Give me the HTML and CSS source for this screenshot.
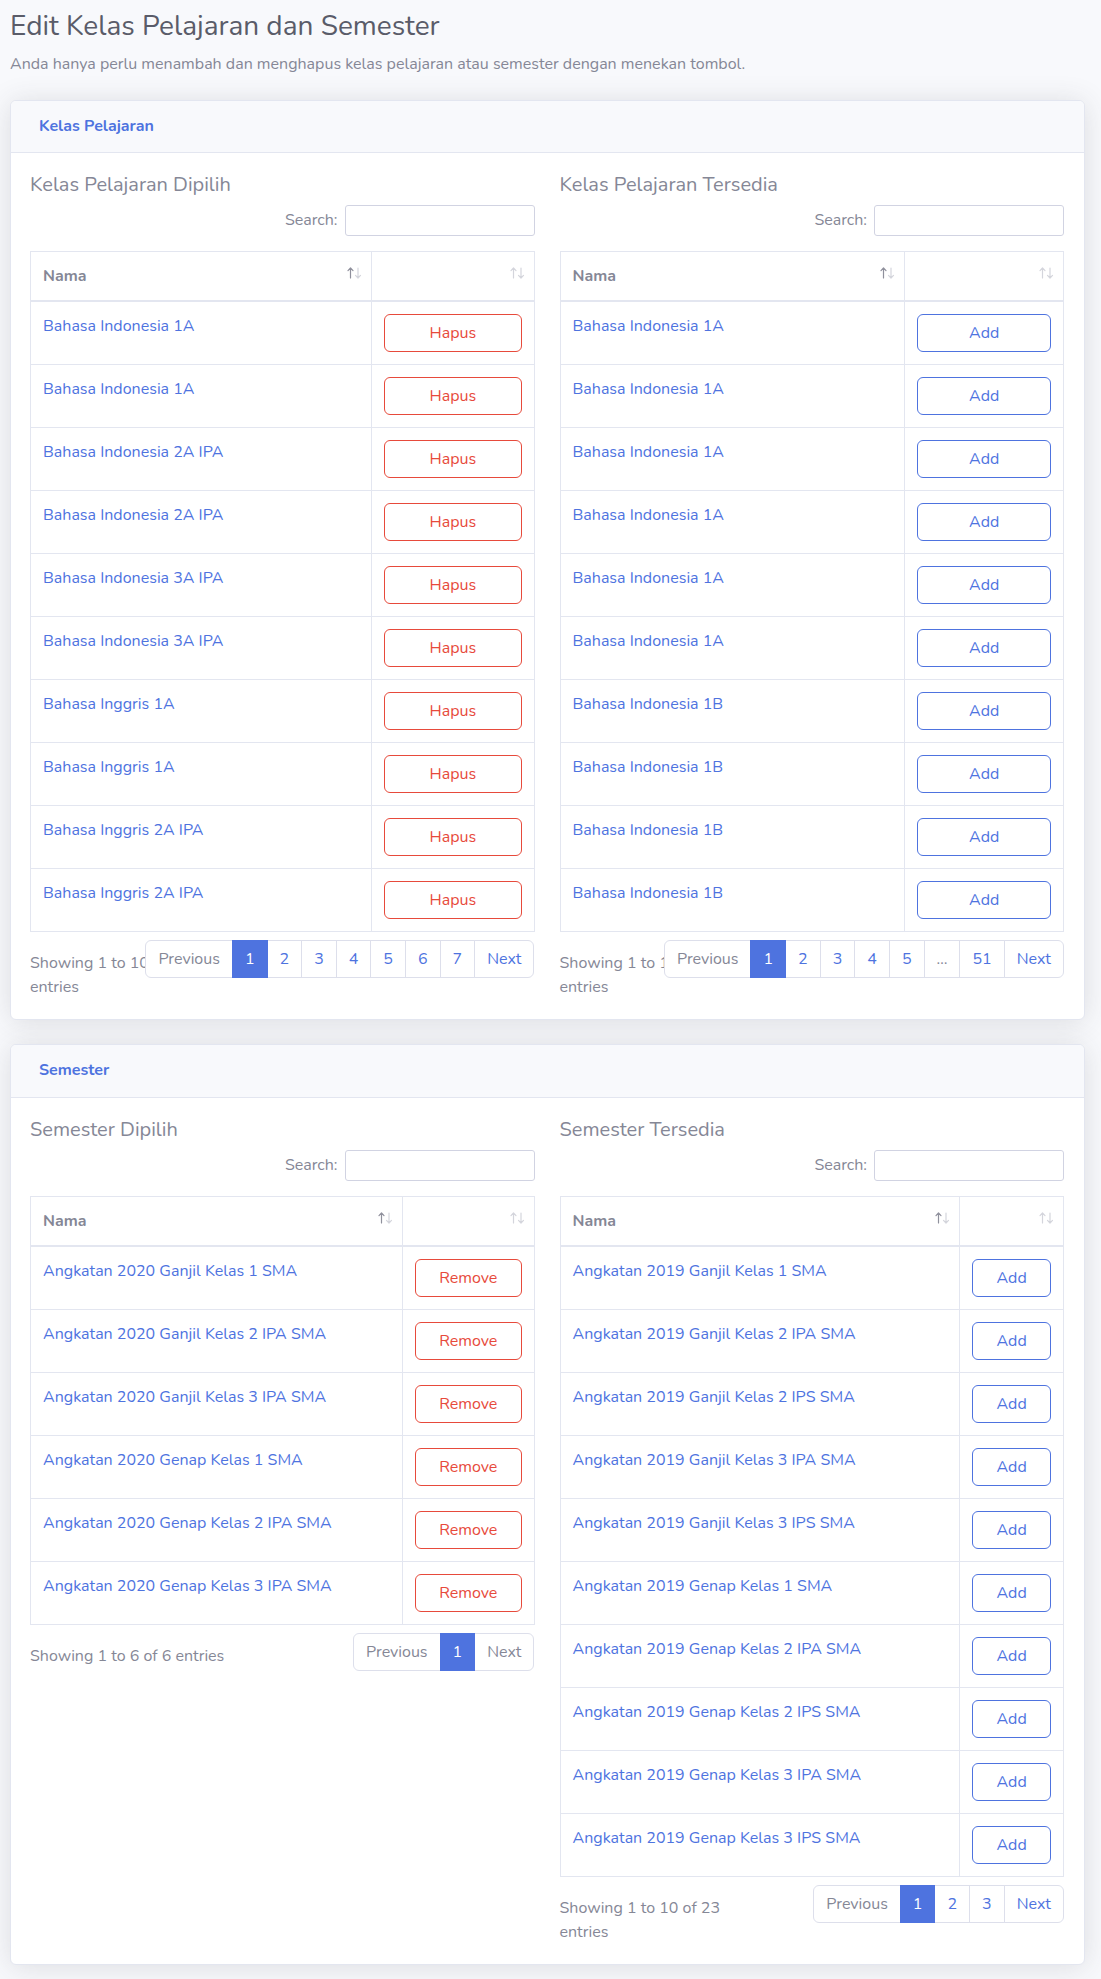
FILE: index.html
```html
<!DOCTYPE html>
<html lang="id">
<head>
<meta charset="utf-8">
<title>Edit Kelas Pelajaran dan Semester</title>
<link rel="stylesheet" href="styles.css">
</head>
<body>
<div class="page">
  <h1 class="title">Edit Kelas Pelajaran dan Semester</h1>
  <p class="subtitle">Anda hanya perlu menambah dan menghapus kelas pelajaran atau semester dengan menekan tombol.</p>

  <div class="card">
    <div class="card-header"><h6>Kelas Pelajaran</h6></div>
    <div class="card-body">
      <div class="cols">
        <div class="col">
          <h5 class="col-title">Kelas Pelajaran Dipilih</h5>
          <div class="filter"><label>Search:</label><input type="search" class="search"></div>
          <table class="dt">
            <thead><tr>
              <th class="w-kl"><div class="th-in"><span>Nama</span><svg class="sort" width="16" height="12" viewBox="0 0 16 12"><g fill="none" stroke-width="1.2" stroke-linecap="round" stroke-linejoin="round"><path class="on" d="M3.5 11V1M1 3.6L3.5 1L6 3.6"/><path class="off" d="M11 1v10M8.5 8.4L11 11l2.5-2.6"/></g></svg></div></th>
              <th><div class="th-in"><span></span><svg class="sort" width="16" height="12" viewBox="0 0 16 12"><g fill="none" stroke-width="1.2" stroke-linecap="round" stroke-linejoin="round"><path class="off" d="M3.5 11V1M1 3.6L3.5 1L6 3.6"/><path class="off" d="M11 1v10M8.5 8.4L11 11l2.5-2.6"/></g></svg></div></th>
            </tr></thead>
            <tbody>
              <tr><td><a href="#">Bahasa Indonesia 1A</a></td><td><button class="btn btn-danger">Hapus</button></td></tr>
              <tr><td><a href="#">Bahasa Indonesia 1A</a></td><td><button class="btn btn-danger">Hapus</button></td></tr>
              <tr><td><a href="#">Bahasa Indonesia 2A IPA</a></td><td><button class="btn btn-danger">Hapus</button></td></tr>
              <tr><td><a href="#">Bahasa Indonesia 2A IPA</a></td><td><button class="btn btn-danger">Hapus</button></td></tr>
              <tr><td><a href="#">Bahasa Indonesia 3A IPA</a></td><td><button class="btn btn-danger">Hapus</button></td></tr>
              <tr><td><a href="#">Bahasa Indonesia 3A IPA</a></td><td><button class="btn btn-danger">Hapus</button></td></tr>
              <tr><td><a href="#">Bahasa Inggris 1A</a></td><td><button class="btn btn-danger">Hapus</button></td></tr>
              <tr><td><a href="#">Bahasa Inggris 1A</a></td><td><button class="btn btn-danger">Hapus</button></td></tr>
              <tr><td><a href="#">Bahasa Inggris 2A IPA</a></td><td><button class="btn btn-danger">Hapus</button></td></tr>
              <tr><td><a href="#">Bahasa Inggris 2A IPA</a></td><td><button class="btn btn-danger">Hapus</button></td></tr>
            </tbody>
          </table>
          <div class="dt-bottom">
            <div class="info">Showing 1 to 10 of 70 entries</div>
            <div class="paginate">
              <ul class="pagination">
                <li class="page-item disabled"><span class="page-link">Previous</span></li>
                <li class="page-item active"><span class="page-link">1</span></li>
                <li class="page-item"><span class="page-link">2</span></li>
                <li class="page-item"><span class="page-link">3</span></li>
                <li class="page-item"><span class="page-link">4</span></li>
                <li class="page-item"><span class="page-link">5</span></li>
                <li class="page-item"><span class="page-link">6</span></li>
                <li class="page-item"><span class="page-link">7</span></li>
                <li class="page-item"><span class="page-link">Next</span></li>
              </ul>
            </div>
          </div>
        </div>

        <div class="col">
          <h5 class="col-title">Kelas Pelajaran Tersedia</h5>
          <div class="filter"><label>Search:</label><input type="search" class="search"></div>
          <table class="dt">
            <thead><tr>
              <th class="w-kr"><div class="th-in"><span>Nama</span><svg class="sort" width="16" height="12" viewBox="0 0 16 12"><g fill="none" stroke-width="1.2" stroke-linecap="round" stroke-linejoin="round"><path class="on" d="M3.5 11V1M1 3.6L3.5 1L6 3.6"/><path class="off" d="M11 1v10M8.5 8.4L11 11l2.5-2.6"/></g></svg></div></th>
              <th><div class="th-in"><span></span><svg class="sort" width="16" height="12" viewBox="0 0 16 12"><g fill="none" stroke-width="1.2" stroke-linecap="round" stroke-linejoin="round"><path class="off" d="M3.5 11V1M1 3.6L3.5 1L6 3.6"/><path class="off" d="M11 1v10M8.5 8.4L11 11l2.5-2.6"/></g></svg></div></th>
            </tr></thead>
            <tbody>
              <tr><td><a href="#">Bahasa Indonesia 1A</a></td><td><button class="btn btn-primary">Add</button></td></tr>
              <tr><td><a href="#">Bahasa Indonesia 1A</a></td><td><button class="btn btn-primary">Add</button></td></tr>
              <tr><td><a href="#">Bahasa Indonesia 1A</a></td><td><button class="btn btn-primary">Add</button></td></tr>
              <tr><td><a href="#">Bahasa Indonesia 1A</a></td><td><button class="btn btn-primary">Add</button></td></tr>
              <tr><td><a href="#">Bahasa Indonesia 1A</a></td><td><button class="btn btn-primary">Add</button></td></tr>
              <tr><td><a href="#">Bahasa Indonesia 1A</a></td><td><button class="btn btn-primary">Add</button></td></tr>
              <tr><td><a href="#">Bahasa Indonesia 1B</a></td><td><button class="btn btn-primary">Add</button></td></tr>
              <tr><td><a href="#">Bahasa Indonesia 1B</a></td><td><button class="btn btn-primary">Add</button></td></tr>
              <tr><td><a href="#">Bahasa Indonesia 1B</a></td><td><button class="btn btn-primary">Add</button></td></tr>
              <tr><td><a href="#">Bahasa Indonesia 1B</a></td><td><button class="btn btn-primary">Add</button></td></tr>
            </tbody>
          </table>
          <div class="dt-bottom">
            <div class="info">Showing 1 to 10 of 505 entries</div>
            <div class="paginate">
              <ul class="pagination">
                <li class="page-item disabled"><span class="page-link">Previous</span></li>
                <li class="page-item active"><span class="page-link">1</span></li>
                <li class="page-item"><span class="page-link">2</span></li>
                <li class="page-item"><span class="page-link">3</span></li>
                <li class="page-item"><span class="page-link">4</span></li>
                <li class="page-item"><span class="page-link">5</span></li>
                <li class="page-item disabled"><span class="page-link">…</span></li>
                <li class="page-item"><span class="page-link">51</span></li>
                <li class="page-item"><span class="page-link">Next</span></li>
              </ul>
            </div>
          </div>
        </div>
      </div>
    </div>
  </div>

  <div class="card">
    <div class="card-header"><h6>Semester</h6></div>
    <div class="card-body">
      <div class="cols">
        <div class="col">
          <h5 class="col-title">Semester Dipilih</h5>
          <div class="filter"><label>Search:</label><input type="search" class="search"></div>
          <table class="dt">
            <thead><tr>
              <th class="w-sl"><div class="th-in"><span>Nama</span><svg class="sort" width="16" height="12" viewBox="0 0 16 12"><g fill="none" stroke-width="1.2" stroke-linecap="round" stroke-linejoin="round"><path class="on" d="M3.5 11V1M1 3.6L3.5 1L6 3.6"/><path class="off" d="M11 1v10M8.5 8.4L11 11l2.5-2.6"/></g></svg></div></th>
              <th><div class="th-in"><span></span><svg class="sort" width="16" height="12" viewBox="0 0 16 12"><g fill="none" stroke-width="1.2" stroke-linecap="round" stroke-linejoin="round"><path class="off" d="M3.5 11V1M1 3.6L3.5 1L6 3.6"/><path class="off" d="M11 1v10M8.5 8.4L11 11l2.5-2.6"/></g></svg></div></th>
            </tr></thead>
            <tbody>
              <tr><td><a href="#">Angkatan 2020 Ganjil Kelas 1 SMA</a></td><td><button class="btn btn-danger">Remove</button></td></tr>
              <tr><td><a href="#">Angkatan 2020 Ganjil Kelas 2 IPA SMA</a></td><td><button class="btn btn-danger">Remove</button></td></tr>
              <tr><td><a href="#">Angkatan 2020 Ganjil Kelas 3 IPA SMA</a></td><td><button class="btn btn-danger">Remove</button></td></tr>
              <tr><td><a href="#">Angkatan 2020 Genap Kelas 1 SMA</a></td><td><button class="btn btn-danger">Remove</button></td></tr>
              <tr><td><a href="#">Angkatan 2020 Genap Kelas 2 IPA SMA</a></td><td><button class="btn btn-danger">Remove</button></td></tr>
              <tr><td><a href="#">Angkatan 2020 Genap Kelas 3 IPA SMA</a></td><td><button class="btn btn-danger">Remove</button></td></tr>
            </tbody>
          </table>
          <div class="dt-bottom">
            <div class="info">Showing 1 to 6 of 6 entries</div>
            <div class="paginate">
              <ul class="pagination">
                <li class="page-item disabled"><span class="page-link">Previous</span></li>
                <li class="page-item active"><span class="page-link">1</span></li>
                <li class="page-item disabled"><span class="page-link">Next</span></li>
              </ul>
            </div>
          </div>
        </div>

        <div class="col">
          <h5 class="col-title">Semester Tersedia</h5>
          <div class="filter"><label>Search:</label><input type="search" class="search"></div>
          <table class="dt">
            <thead><tr>
              <th class="w-sr"><div class="th-in"><span>Nama</span><svg class="sort" width="16" height="12" viewBox="0 0 16 12"><g fill="none" stroke-width="1.2" stroke-linecap="round" stroke-linejoin="round"><path class="on" d="M3.5 11V1M1 3.6L3.5 1L6 3.6"/><path class="off" d="M11 1v10M8.5 8.4L11 11l2.5-2.6"/></g></svg></div></th>
              <th><div class="th-in"><span></span><svg class="sort" width="16" height="12" viewBox="0 0 16 12"><g fill="none" stroke-width="1.2" stroke-linecap="round" stroke-linejoin="round"><path class="off" d="M3.5 11V1M1 3.6L3.5 1L6 3.6"/><path class="off" d="M11 1v10M8.5 8.4L11 11l2.5-2.6"/></g></svg></div></th>
            </tr></thead>
            <tbody>
              <tr><td><a href="#">Angkatan 2019 Ganjil Kelas 1 SMA</a></td><td><button class="btn btn-primary">Add</button></td></tr>
              <tr><td><a href="#">Angkatan 2019 Ganjil Kelas 2 IPA SMA</a></td><td><button class="btn btn-primary">Add</button></td></tr>
              <tr><td><a href="#">Angkatan 2019 Ganjil Kelas 2 IPS SMA</a></td><td><button class="btn btn-primary">Add</button></td></tr>
              <tr><td><a href="#">Angkatan 2019 Ganjil Kelas 3 IPA SMA</a></td><td><button class="btn btn-primary">Add</button></td></tr>
              <tr><td><a href="#">Angkatan 2019 Ganjil Kelas 3 IPS SMA</a></td><td><button class="btn btn-primary">Add</button></td></tr>
              <tr><td><a href="#">Angkatan 2019 Genap Kelas 1 SMA</a></td><td><button class="btn btn-primary">Add</button></td></tr>
              <tr><td><a href="#">Angkatan 2019 Genap Kelas 2 IPA SMA</a></td><td><button class="btn btn-primary">Add</button></td></tr>
              <tr><td><a href="#">Angkatan 2019 Genap Kelas 2 IPS SMA</a></td><td><button class="btn btn-primary">Add</button></td></tr>
              <tr><td><a href="#">Angkatan 2019 Genap Kelas 3 IPA SMA</a></td><td><button class="btn btn-primary">Add</button></td></tr>
              <tr><td><a href="#">Angkatan 2019 Genap Kelas 3 IPS SMA</a></td><td><button class="btn btn-primary">Add</button></td></tr>
            </tbody>
          </table>
          <div class="dt-bottom">
            <div class="info">Showing 1 to 10 of 23 entries</div>
            <div class="paginate">
              <ul class="pagination">
                <li class="page-item disabled"><span class="page-link">Previous</span></li>
                <li class="page-item active"><span class="page-link">1</span></li>
                <li class="page-item"><span class="page-link">2</span></li>
                <li class="page-item"><span class="page-link">3</span></li>
                <li class="page-item"><span class="page-link">Next</span></li>
              </ul>
            </div>
          </div>
        </div>
      </div>
    </div>
  </div>
</div>
</body>
</html>
```
FILE: styles.css
```css
* { box-sizing: border-box; }

body {
  margin: 0;
  background: #f8f9fc;
  font-family: "Nunito", "Lato", "Noto Sans", sans-serif;
  font-size: 16px;
  line-height: 1.5;
  color: #858796;
}

.page {
  padding: 10px 16px 0 10px;
}

.title {
  margin: 0 0 8px;
  font-size: 28px;
  font-weight: 400;
  line-height: 1.2;
  color: #5a5c69;
}

.subtitle {
  margin: 0 0 24px;
}

.card {
  background: #fff;
  border: 1px solid #e3e6f0;
  border-radius: 6px;
  box-shadow: 0 2px 28px 0 rgba(58, 59, 69, 0.15);
  margin-bottom: 24px;
  overflow: hidden;
}

.card-header {
  background: #f8f9fc;
  border-bottom: 1px solid #e3e6f0;
  padding: 16px 28px;
}

.card-header h6 {
  margin: 0;
  font-size: 16px;
  font-weight: 700;
  line-height: 1.2;
  color: #4e73df;
}

.card-body {
  padding: 20px 20px 20px 19px;
}

.cols {
  display: flex;
  gap: 25px;
}

.col {
  flex: 1 1 0;
  min-width: 0;
}

.col-title {
  margin: 0 0 8px;
  font-size: 20px;
  font-weight: 400;
  line-height: 1.2;
  color: #858796;
}

.filter {
  display: flex;
  justify-content: flex-end;
  align-items: center;
  margin-bottom: 15px;
}

.filter label {
  margin-right: 7px;
}

.search {
  width: 190px;
  height: 31px;
  border: 1px solid #d1d3e2;
  border-radius: 3px;
  padding: 4px 8px;
  font: inherit;
  font-size: 14px;
  background: #fff;
}

.dt {
  width: 100%;
  border-collapse: collapse;
  margin: 0 0 6px;
  border: 1px solid #e3e6f0;
}

.dt th,
.dt td {
  border: 1px solid #e3e6f0;
  padding: 12px;
  text-align: left;
  vertical-align: top;
}

.dt thead th {
  border-bottom-width: 2px;
  font-weight: 700;
  vertical-align: bottom;
  padding-right: 8px;
}

.th-in {
  display: flex;
  justify-content: space-between;
  align-items: flex-start;
  min-height: 24px;
}

.sort {
  margin-top: 3px;
  flex: none;
}

.sort .on { stroke: #8f909c; }
.sort .off { stroke: #d4d5dc; }

.w-kl { width: 67.8%; }
.w-kr { width: 68.5%; }
.w-sl { width: 73.9%; }
.w-sr { width: 79.4%; }

.dt td a {
  color: #4e73df;
  text-decoration: none;
}

.btn {
  display: block;
  width: 100%;
  padding: 6px 12px;
  font: inherit;
  line-height: 1.5;
  background: #fff;
  border: 1px solid;
  border-radius: 6px;
  text-align: center;
}

.btn-danger {
  color: #e74a3b;
  border-color: #e74a3b;
}

.btn-primary {
  color: #4e73df;
  border-color: #4e73df;
}

.dt-bottom {
  display: flex;
  margin: 0 -15px;
}

.info {
  flex: 0 0 44%;
  max-width: 44%;
  padding: 13.6px 15px 0;
}

.paginate {
  flex: 0 0 56%;
  max-width: 56%;
  padding: 0 15px;
}

.pagination {
  display: flex;
  justify-content: flex-end;
  list-style: none;
  margin: 2px 0;
  padding: 0;
}

.page-link {
  position: relative;
  display: block;
  padding: 8px 12px;
  margin-left: -1px;
  line-height: 1.25;
  color: #4e73df;
  background: #fff;
  border: 1px solid #dddfeb;
}

.page-item:first-child .page-link {
  margin-left: 0;
  border-top-left-radius: 6px;
  border-bottom-left-radius: 6px;
}

.page-item:last-child .page-link {
  border-top-right-radius: 6px;
  border-bottom-right-radius: 6px;
}

.page-item.active .page-link {
  z-index: 3;
  color: #fff;
  background: #4e73df;
  border-color: #4e73df;
}

.page-item.disabled .page-link {
  color: #858796;
}
```
